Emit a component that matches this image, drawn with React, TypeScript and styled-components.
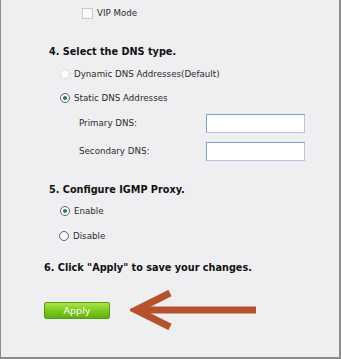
import React from 'react'
import styled, { createGlobalStyle } from 'styled-components'

const GlobalStyle = createGlobalStyle`
  html, body {
    margin: 0;
    padding: 0;
    background: #ffffff;
  }
`

const Frame = styled.div`
  box-sizing: border-box;
  width: 341px;
  height: 359px;
  background-color: #efeef0;
  border-left: 1px solid #8c8c8c;
  border-right: 2px solid #8c8c8c;
  border-bottom: 2px solid #8c8c8c;
  font-family: "DejaVu Sans", Verdana, sans-serif;
  color: #2a2a2a;
  display: flex;
  flex-direction: column;
`

const Row = styled.div<{ $top: number; $left: number; $height?: number }>`
  display: flex;
  align-items: center;
  margin-top: ${p => p.$top}px;
  padding-left: ${p => p.$left}px;
  height: ${p => p.$height ?? 16}px;
`

const Heading = styled.div<{ $top: number; $left: number }>`
  margin-top: ${p => p.$top}px;
  padding-left: ${p => p.$left}px;
  height: 16px;
  line-height: 16px;
  font-size: 9.7px;
  font-weight: bold;
  color: #111111;
`

const Text = styled.span`
  font-size: 8.7px;
  color: #2c2c2c;
`

const Checkbox = styled.span`
  box-sizing: border-box;
  width: 11px;
  height: 11px;
  background: #fbfbfb;
  border: 1px solid #c9c9c9;
  margin-right: 4px;
`

const Radio = styled.span<{ $checked?: boolean; $disabled?: boolean }>`
  box-sizing: border-box;
  position: relative;
  width: 10px;
  height: 10px;
  border-radius: 50%;
  background: #ffffff;
  border: 1px solid ${p => (p.$disabled ? '#dcdcdc' : '#4a6391')};
  margin-right: 4px;
  &::after {
    content: '';
    display: ${p => (p.$checked ? 'block' : 'none')};
    position: absolute;
    left: 2px;
    top: 2px;
    width: 4px;
    height: 4px;
    border-radius: 50%;
    background: #2e7d2e;
  }
`

const Label = styled(Text)`
  width: 127px;
`

const Input = styled.div`
  box-sizing: border-box;
  width: 99px;
  height: 19px;
  background: #ffffff;
  border-top: 1px solid #7f9fcf;
  border-left: 1px solid #7f9fcf;
  border-right: 1px solid #b8c6dd;
  border-bottom: 1px solid #b8c6dd;
`

const ApplyButton = styled.div`
  box-sizing: border-box;
  width: 66px;
  height: 17px;
  border: 1px solid #5a9a18;
  border-radius: 2px;
  background: linear-gradient(to bottom, #a8e64c 0%, #7ccb1e 50%, #62b010 100%);
  color: #ffffff;
  font-size: 9.5px;
  display: flex;
  align-items: center;
  justify-content: center;
`

const Arrow = styled.svg`
  margin-left: 20px;
`

export default function App() {
  return (
    <>
      <GlobalStyle />
      <Frame>
        <Row $top={5} $left={81}>
          <Checkbox />
          <Text>VIP Mode</Text>
        </Row>

        <Heading $top={23} $left={48}>4. Select the DNS type.</Heading>
        <Row $top={6} $left={59}>
          <Radio $disabled />
          <Text>Dynamic DNS Addresses(Default)</Text>
        </Row>
        <Row $top={8} $left={59}>
          <Radio $checked />
          <Text>Static DNS Addresses</Text>
        </Row>
        <Row $top={7} $left={78} $height={20}>
          <Label>Primary DNS:</Label>
          <Input />
        </Row>
        <Row $top={8} $left={78} $height={20}>
          <Label>Secondary DNS:</Label>
          <Input />
        </Row>

        <Heading $top={21} $left={48}>5. Configure IGMP Proxy.</Heading>
        <Row $top={5} $left={59}>
          <Radio $checked />
          <Text>Enable</Text>
        </Row>
        <Row $top={9} $left={58}>
          <Radio />
          <Text>Disable</Text>
        </Row>

        <Heading $top={16} $left={43}>6. Click "Apply" to save your changes.</Heading>
        <Row $top={14} $left={43} $height={40}>
          <ApplyButton>Apply</ApplyButton>
          <Arrow width="128" height="40" viewBox="0 0 128 40">
            <line x1="6" y1="20" x2="126" y2="20" stroke="#b5512d" strokeWidth="7" />
            <polyline points="40,3 6,20 40,37" fill="none" stroke="#b5512d" strokeWidth="7" strokeLinejoin="miter" />
          </Arrow>
        </Row>
      </Frame>
    </>
  )
}
